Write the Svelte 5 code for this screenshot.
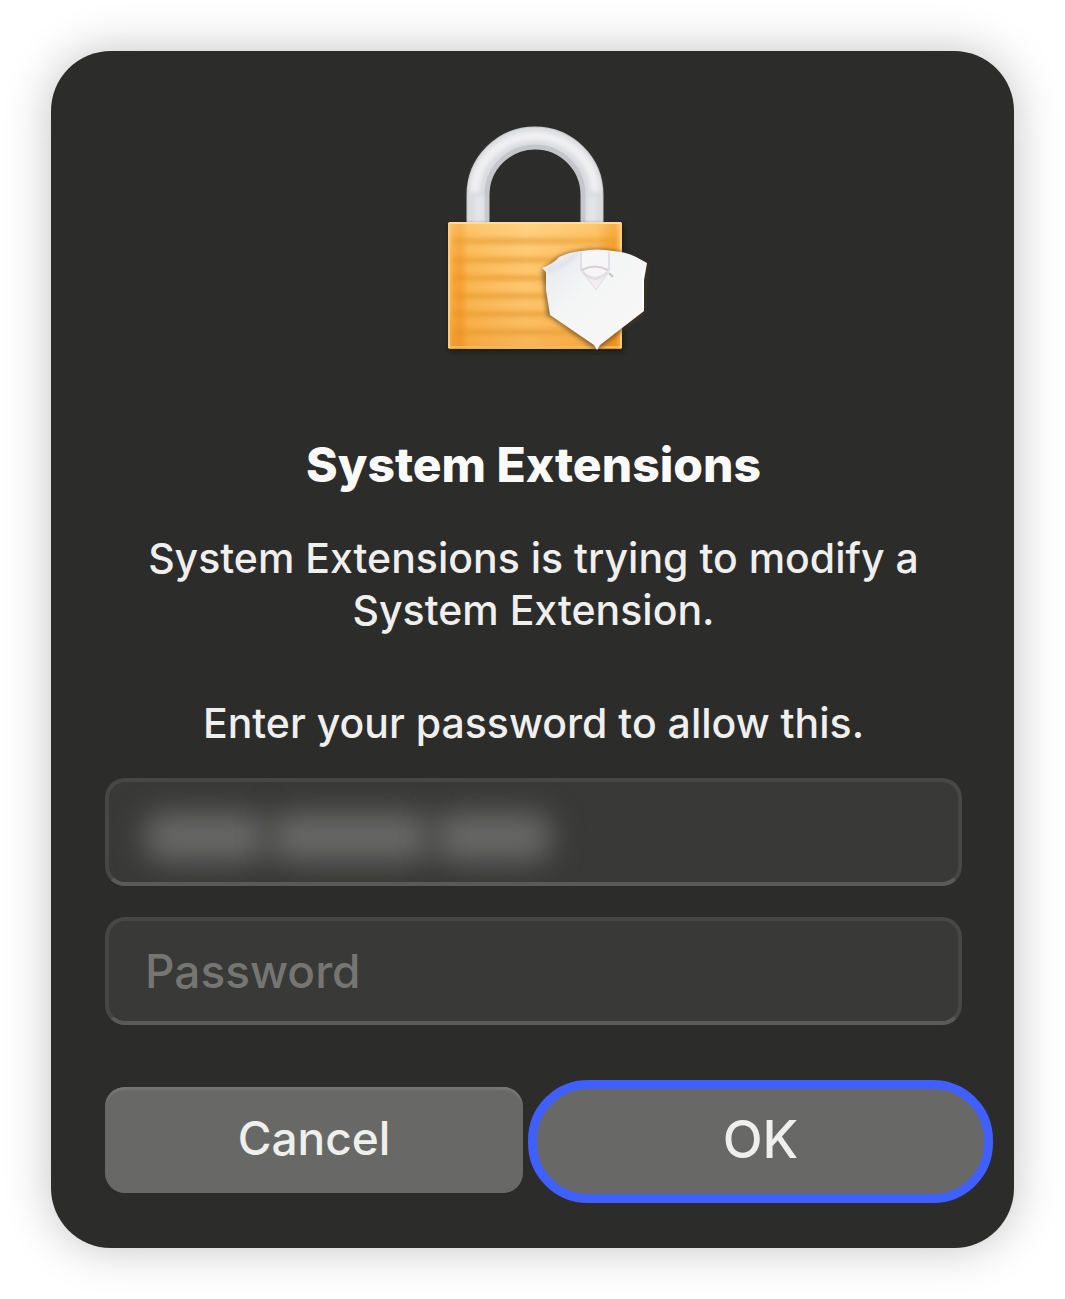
<script lang="ts">
  let password = $state('');

  // Soft shapes that hide the account name
  const redacted = [{ width: 120 }, { width: 158 }, { width: 116 }];

  // Horizontal ridges on the lock body
  const ridges = [128, 147, 165, 183, 201, 219];
</script>

<main class="page">
  <form class="dialog" aria-labelledby="title" onsubmit={(e) => e.preventDefault()}>
    <svg class="lock" viewBox="-12 0 250 260" aria-hidden="true">
      <defs>
        <linearGradient id="body" x1="0" x2="1">
          <stop offset="0" stop-color="#ffbd62" />
          <stop offset="0.03" stop-color="#f5a33a" />
          <stop offset="0.07" stop-color="#f59a2a" />
          <stop offset="0.12" stop-color="#fbb550" />
          <stop offset="0.45" stop-color="#ffc872" />
          <stop offset="0.85" stop-color="#fdb64f" />
          <stop offset="0.92" stop-color="#f59a22" />
          <stop offset="0.96" stop-color="#f39212" />
          <stop offset="1" stop-color="#ffc46c" />
        </linearGradient>
        <linearGradient id="shade" x1="0" x2="0" y1="0" y2="1">
          <stop offset="0" stop-color="#ffe2a0" stop-opacity="0.4" />
          <stop offset="0.4" stop-color="#ffc870" stop-opacity="0.1" />
          <stop offset="1" stop-color="#e88a1c" stop-opacity="0.35" />
        </linearGradient>
        <linearGradient id="ridge" x1="0" x2="1">
          <stop offset="0" stop-color="#e3911f" stop-opacity="0.4" />
          <stop offset="0.3" stop-color="#e29a33" stop-opacity="0.65" />
          <stop offset="1" stop-color="#e3911f" stop-opacity="0.4" />
        </linearGradient>
        <linearGradient id="shield" x1="0" x2="1" y1="0" y2="1">
          <stop offset="0" stop-color="#e6e7ee" />
          <stop offset="0.4" stop-color="#f4f5f5" />
          <stop offset="1" stop-color="#faf8f9" />
        </linearGradient>
        <filter id="soft" x="-20%" y="-20%" width="140%" height="140%">
          <feGaussianBlur stdDeviation="2" />
        </filter>
        <filter id="ridge-soft" x="-5%" y="-200%" width="110%" height="500%">
          <feGaussianBlur stdDeviation="2" />
        </filter>
      </defs>

      <g fill="none">
        <path d="M57 116V85a57 57 0 0 1 114 0v31" stroke="#c5c6cb" stroke-width="23" />
        <path d="M55 116V85a59 59 0 0 1 118 0v31" stroke="#dadbde" stroke-width="17" />
        <path d="M54 82a60 56 0 0 1 120 0" stroke="#f0f0f2" stroke-width="9" filter="url(#soft)" />
        <path d="M58 116V86M171 116V86" stroke="#e4e5e9" stroke-width="9" filter="url(#soft)" />
      </g>

      <rect x="28" y="114" width="175" height="128" rx="2" fill="#17120b" opacity="0.6" filter="url(#soft)" />
      <rect x="27" y="112" width="174" height="127" rx="2" fill="url(#body)" />
      <rect x="27" y="112" width="174" height="127" rx="2" fill="url(#shade)" />
      {#each ridges as y}
        <rect x="32" {y} width="164" height="6" fill="url(#ridge)" filter="url(#ridge-soft)" />
      {/each}
      <path d="M28 113H200" stroke="#ffdc97" stroke-width="2" />
      <path d="M28 237H200" stroke="#f6b65c" stroke-width="2" />
      <path d="M28 113V238M200 113V238" stroke="#ffcb7d" stroke-width="2" />

      <path
        d="M121 160L138 146Q150 141 160 140Q176 137 192 140Q207 143 227 154L223 204L176 241L126 205Z"
        fill="#4c3b22"
        opacity="0.6"
        filter="url(#soft)"
      />
      <path
        d="M121 158Q132 154 138 147Q148 142 160 141Q176 138 192 141Q206 142 215 147L226 153L223 170V201L179 235L176 240L173 235L129 205L125 180V162Z"
        fill="url(#shield)"
      />
      <path d="M126 161Q142 156 156 144" fill="none" stroke="#cdd0dc" stroke-width="3" opacity="0.6" filter="url(#soft)" />
      <path d="M160 142V160Q174 176 188 160V142" fill="#f6f5f7" stroke="#e2e0e5" stroke-width="2" />
      <path d="M161 160Q174 153 187 160" fill="none" stroke="#d3cfd4" stroke-width="2" />
      <path d="M162 163Q174 176 187 163L175 180Z" fill="#f1edf0" stroke="#e0dbdf" stroke-width="1" />
      <path d="M188 163l4 4" stroke="#adb0b7" stroke-width="2" opacity="0.7" />
      <path d="M222 160V198" stroke="#ffffff" stroke-width="2" />
    </svg>

    <h1 id="title">System Extensions</h1>
    <p class="message">System Extensions is trying to modify a System Extension.</p>
    <p class="message">Enter your password to allow this.</p>

    <div class="fields">
      <div class="field">
        <input type="text" aria-label="User name" readonly />
        <div class="redacted" aria-hidden="true">
          {#each redacted as part}
            <span style="width: {part.width}px"></span>
          {/each}
        </div>
      </div>
      <div class="field">
        <input type="password" aria-label="Password" placeholder="Password" bind:value={password} />
      </div>
    </div>

    <div class="actions">
      <button type="button" class="cancel">Cancel</button>
      <button type="submit" class="ok">OK</button>
    </div>
  </form>
</main>

<style>
  :global(body) {
    background: #fff;
  }
  .page {
    padding: 51px;
    font-family: Inter, 'Liberation Sans', sans-serif;
  }
  .dialog {
    display: flex;
    flex-direction: column;
    align-items: center;
    padding: 59px 52px 45px 54px;
    border-radius: 60px;
    background: #2c2c2a;
    box-shadow: 0 0 48px rgba(0, 0, 0, 0.24);
    color: #efefee;
  }
  .lock {
    width: 250px;
    height: 260px;
  }
  h1 {
    margin: 67px 0 0;
    font-size: 48px;
    line-height: 56px;
    font-weight: 800;
    color: #fafafa;
  }
  .message {
    max-width: 820px;
    margin: 39px 0 0;
    font-size: 41px;
    line-height: 52px;
    font-weight: 500;
    text-align: center;
  }
  .message + .message {
    margin-top: 61px;
  }
  .fields {
    display: flex;
    flex-direction: column;
    gap: 31px;
    width: 100%;
    margin-top: 29px;
  }
  .field {
    position: relative;
  }
  input {
    display: block;
    box-sizing: border-box;
    width: 100%;
    height: 108px;
    padding: 0 36px;
    border: 4px solid #474745;
    border-bottom-color: #5a5a58;
    border-radius: 20px;
    outline: none;
    background: #393937;
    color: #efefee;
    font: inherit;
    font-size: 46px;
    font-weight: 500;
  }
  input::placeholder {
    color: #757573;
    opacity: 1;
  }
  .redacted {
    position: absolute;
    inset: 4px;
    display: flex;
    align-items: center;
    gap: 6px;
    padding: 10px 0 0 36px;
    overflow: hidden;
    pointer-events: none;
  }
  .redacted span {
    height: 48px;
    border-radius: 16px;
    background: #696967;
    filter: blur(15px);
  }
  .actions {
    display: grid;
    grid-template-columns: 418fr 465fr;
    align-items: start;
    gap: 5px;
    align-self: stretch;
    margin: 55px -31px 0 0;
  }
  button {
    padding: 0 0 4px;
    border: 0;
    background: #686866;
    color: #efefee;
    font: inherit;
    font-size: 46px;
    font-weight: 500;
  }
  .cancel {
    height: 106px;
    margin-top: 7px;
    border-radius: 20px;
    box-shadow: inset 0 4px 2px -1px #777775;
  }
  .ok {
    height: 123px;
    border: 9px solid #3f5fff;
    border-radius: 60px;
    font-size: 52px;
  }
</style>
